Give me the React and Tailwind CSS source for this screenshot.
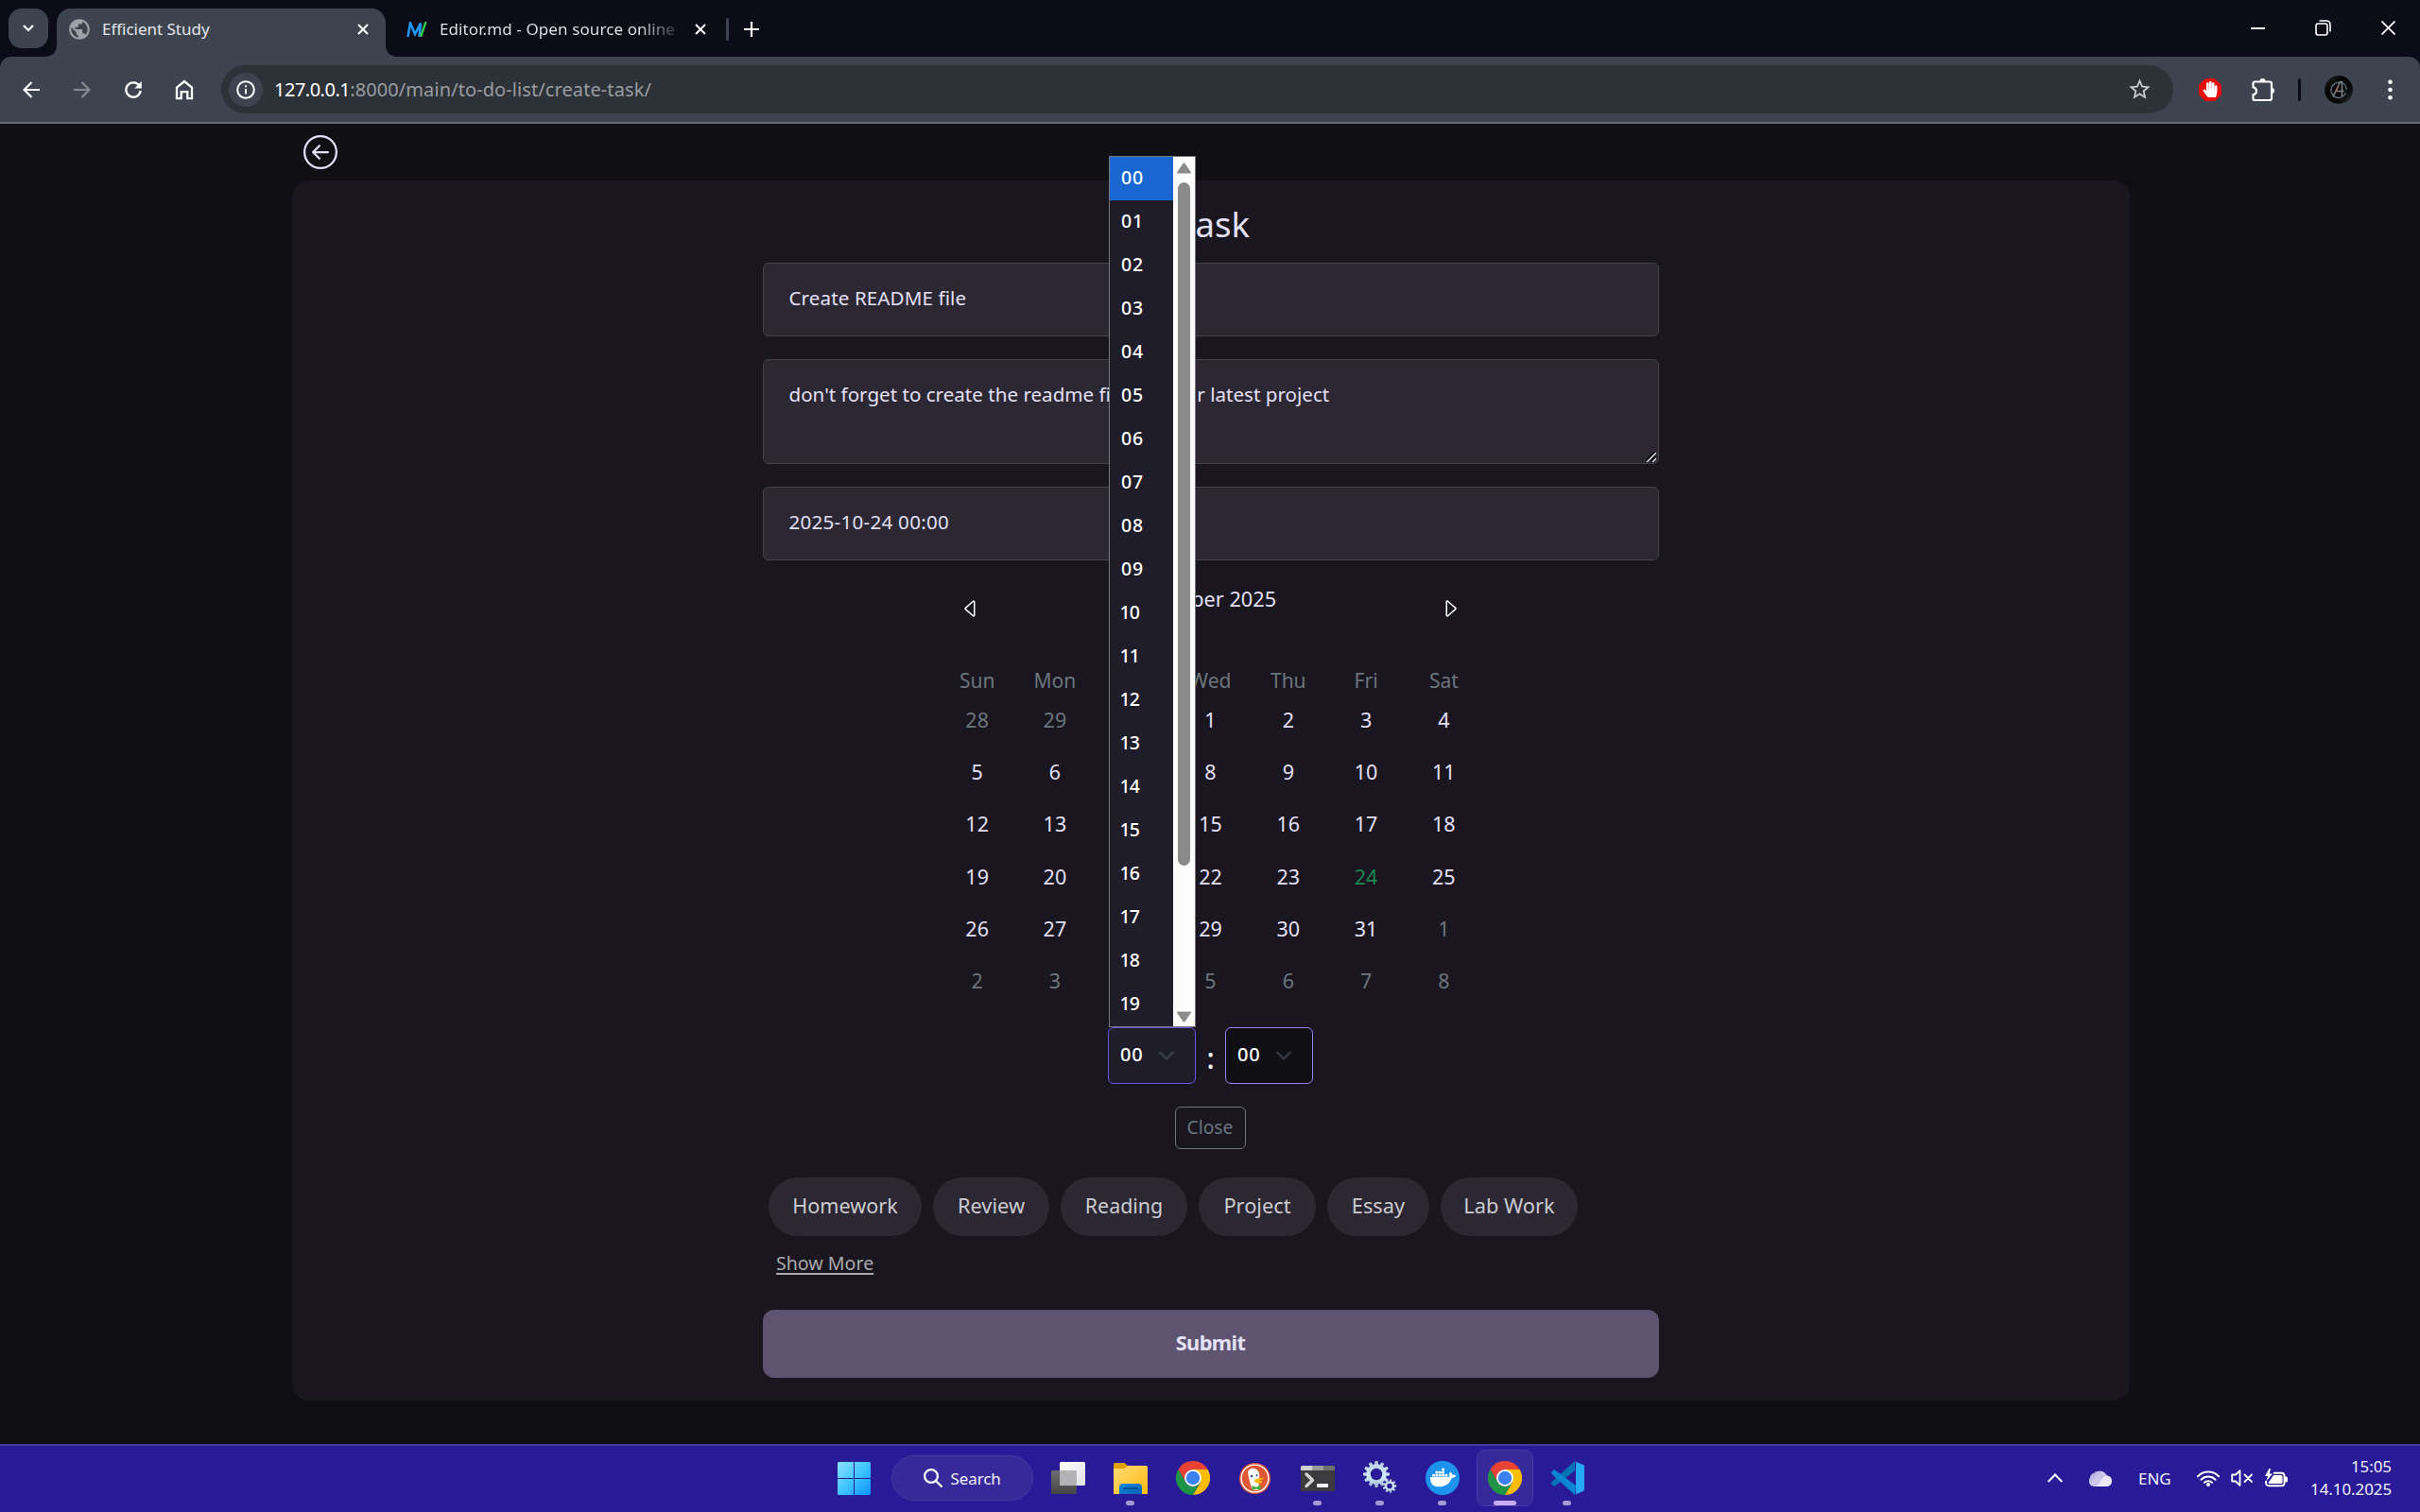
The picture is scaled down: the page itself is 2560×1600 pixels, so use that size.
import { BsArrowLeftCircle, BsCaretLeft, BsCaretRight } from "react-icons/bs";
import { MdPublic, MdStarBorder } from "react-icons/md";
import { FaHandPaper } from "react-icons/fa";
import { SiDocker } from "react-icons/si";

function CloseIcon() {
  return (
    <svg className="size-3 shrink-0" viewBox="0 0 12 12" stroke="#fff" strokeWidth="2">
      <path d="M1 1l10 10M11 1L1 11" />
    </svg>
  );
}

function TabStrip() {
  return (
    <div className="flex h-[60px] items-start bg-[#0c0c18] pl-[9px] text-[17px] text-[#e6e7ea]">
      <div className="mt-[9px] flex size-[42px] items-center justify-center rounded-[14px] bg-[#3d444f]">
        <svg className="size-3" viewBox="0 0 12 12" fill="none" stroke="#fff" strokeWidth="2.2">
          <path d="M1 3l5 5 5-5" />
        </svg>
      </div>
      <div className="relative mt-[9px] ml-[9px] flex h-[51px] w-[348px] items-start rounded-t-[15px] bg-[#3d444f] pl-[11px]">
        <svg className="absolute bottom-0 -left-3 size-3" viewBox="0 0 12 12" fill="#3d444f">
          <path d="M12 0v12H0C7 12 12 7 12 0z" />
        </svg>
        <svg className="absolute -right-3 bottom-0 size-3" viewBox="0 0 12 12" fill="#3d444f">
          <path d="M0 0v12h12C5 12 0 7 0 0z" />
        </svg>
        <div className="flex h-[43px] w-full items-center">
          <MdPublic className="size-[26px] text-[#9ea2a8]" />
          <span className="ml-[11px] flex-1 leading-[45px] tracking-[-0.02px]">Efficient Study</span>
          <div className="mr-[18px] flex">
            <CloseIcon />
          </div>
        </div>
      </div>
      <div className="mt-[9px] ml-[22px] flex h-[43px] items-center">
        <svg className="h-4 w-[22px]" viewBox="0 0 22 16" fill="none">
          <path d="M1.5 16L4 1.5 9 13 15 1.5 13.5 16" stroke="#2196f3" strokeWidth="2.6" />
          <path d="M20.5 0L15 16" stroke="#2fcc4f" strokeWidth="2.4" />
        </svg>
        <span className="ml-[13px] w-[249px] overflow-hidden whitespace-nowrap bg-linear-to-r from-[#e6e7ea] from-85% to-[#3a3a44] bg-clip-text leading-[45px] tracking-[0.1px] text-transparent">
          Editor.md - Open source online
        </span>
        <div className="ml-[21px] flex">
          <CloseIcon />
        </div>
        <div className="ml-[21px] h-6 w-[3px] rounded bg-[#3d444f]" />
        <svg className="ml-4 size-4" viewBox="0 0 16 16" stroke="#fff" strokeWidth="2.2">
          <path d="M8 0v16M0 8h16" />
        </svg>
      </div>
      <div className="mt-[21px] mr-[26px] ml-auto flex items-center gap-[53px]">
        <div className="h-[2px] w-[15px] bg-white" />
        <svg className="size-[17px]" viewBox="0 0 17 17" fill="none" stroke="#fff" strokeWidth="1.6">
          <rect x="1" y="4" width="12" height="12" rx="2.2" />
          <path d="M4.5 1H12a4 4 0 0 1 4 4v7.5" />
        </svg>
        <svg className="size-[15px]" viewBox="0 0 15 15" stroke="#fff" strokeWidth="1.7">
          <path d="M.5.5l14 14M14.5.5l-14 14" />
        </svg>
      </div>
    </div>
  );
}

function Toolbar() {
  return (
    <div className="bg-[#0c0c18]">
      <div className="flex h-[71px] items-center rounded-t-[12px] border-b-2 border-[#666c75] bg-[#3d444f] pl-6">
        <svg className="size-[18px]" viewBox="0 0 18 18" fill="none" stroke="#fff" strokeWidth="2.2">
          <path d="M18 9H2M9.5 1L1.6 9l7.9 8" />
        </svg>
        <svg className="ml-9 size-[18px]" viewBox="0 0 18 18" fill="none" stroke="#868b92" strokeWidth="2.2">
          <path d="M0 9h16M8.500 1l7.900 8-7.900 8" />
        </svg>
        <svg className="ml-9 size-[18px]" viewBox="0 0 18 18" fill="none" stroke="#fff" strokeWidth="2.3">
          <path d="M15.300 4.500A7.700 7.700 0 1 0 16.700 10" />
          <path d="M17.800 0v7.500h-7.500z" fill="#fff" stroke="none" />
        </svg>
        <svg className="ml-[35px] h-[22px] w-5" viewBox="0 0 20 22" fill="none" stroke="#fff" strokeWidth="2.3">
          <path d="M2 8.600L10 2l8 6.600v11.600h-4.700v-7H6.700v7H2z" />
        </svg>
        <div className="ml-[29px] flex h-[51px] flex-1 items-center rounded-full bg-[#2d3238] pr-[23px] pl-2">
          <div className="flex size-9 items-center justify-center rounded-full bg-[#3d444f]">
            <svg className="size-5" viewBox="0 0 20 20" fill="none" stroke="#fff" strokeWidth="2">
              <circle cx="10" cy="10" r="8.800" />
              <path d="M10 9v5.500M10 5.300v2" />
            </svg>
          </div>
          <span className="ml-3 text-[20px] leading-[50px] tracking-[0.09px] whitespace-nowrap text-[#999ca1]">
            <span className="tracking-[-0.5px] text-white">127.0.0.1</span>:8000/main/to-do-list/create-task/
          </span>
          <MdStarBorder className="ml-auto size-[27px] -mr-px text-[#c7c9cc]" />
        </div>
        <svg className="ml-[27px] size-6" viewBox="0 0 24 24" fill="#e60d0d">
          <path d="M7 0h10l7 7v10l-7 7H7l-7-7V7z" />
          <FaHandPaper x="3.500" y="3" size="17" color="#fff" />
        </svg>
        <svg className="ml-8 h-[26px] w-[25px]" viewBox="0 0 25 26" fill="none" stroke="#fff" strokeWidth="2.2">
          <path d="M3 4.500h16a2 2 0 0 1 2 2V22a2 2 0 0 1-2 2H3a1.500 1.500 0 0 1-1.500-1.500v-4.300c2.200-.5 3.500-1.800 3.500-4s-1.300-3.500-3.500-4V6A1.500 1.500 0 0 1 3 4.500z" />
          <path d="M8.500 4a3 3 0 0 1 6 0zM21 11a3 3 0 0 1 0 6z" fill="#fff" stroke="none" />
        </svg>
        <div className="ml-6 h-6 w-[3px] rounded bg-[#0c0c18]" />
        <svg className="ml-[25px] size-[30px]" viewBox="0 0 30 30" fill="none">
          <defs>
            <linearGradient id="av" x1="0" y1="0" x2="1" y2="1">
              <stop offset="0" stopColor="#2c2c2c" />
              <stop offset=".35" stopColor="#020202" />
              <stop offset=".7" stopColor="#090909" />
              <stop offset="1" stopColor="#3a3a3a" />
            </linearGradient>
          </defs>
          <circle cx="15" cy="15" r="15" fill="url(#av)" />
          <path d="M17.500 7.800A8 8 0 1 0 22.500 18" stroke="#566872" strokeWidth="1.500" />
          <path d="M19 7.500a8 8 0 0 1 4 7.500" stroke="#4c7482" strokeWidth="1.300" />
          <path d="M9 22.500L16.500 6.500h2V22M11.500 16.500h9" stroke="#7b7f83" strokeWidth="1.600" />
          <path d="M15 11l-3 6" stroke="#9c5a56" strokeWidth="1.200" />
        </svg>
        <svg className="mr-[29px] ml-[37px] h-[22px] w-[5px]" viewBox="0 0 5 22" fill="#fff">
          <circle cx="2.500" cy="2.700" r="2.300" />
          <circle cx="2.500" cy="11" r="2.300" />
          <circle cx="2.500" cy="19.300" r="2.300" />
        </svg>
      </div>
    </div>
  );
}

const weekdays = ["Sun", "Mon", "Tue", "Wed", "Thu", "Fri", "Sat"];
const days = [28, 29, 30, ...Array.from({ length: 31 }, (_, i) => i + 1), 1, 2, 3, 4, 5, 6, 7, 8];

function dayColor(day, index) {
  if (index < 3 || index > 33) return "text-[#6c757d]";
  if (day === 24) return "text-[#198754]";
  return "text-[#e4e0f6]";
}

function Calendar() {
  return (
    <div className="flex flex-col items-center">
      <div className="mt-[19px] mr-px flex h-16 w-[531px] items-center justify-between text-[#e4e0f6]">
        <BsCaretLeft className="size-6 text-white" />
        <span className="self-start pl-px text-[21.7px] leading-[43px]">October 2025</span>
        <BsCaretRight className="size-6 text-white" />
      </div>
      <div className="mt-[29px] mr-px grid w-[576px] grid-cols-7 text-center text-[#6c757d]">
        {weekdays.map((d) => (
          <span key={d} className="h-7 text-[21px] leading-[30px]">{d}</span>
        ))}
      </div>
      <div className="mr-px grid h-[331px] w-[576px] grid-cols-7 grid-rows-6 text-center text-[21.5px] leading-[57px]">
        {days.map((d, i) => (
          <span key={i} className={dayColor(d, i)}>{d}</span>
        ))}
      </div>
    </div>
  );
}

function HourMenu() {
  return (
    <div className="absolute -top-[923px] left-0 z-10 flex h-[922px] w-[92px] border border-[#767676] bg-[#1f1d29]">
      <div className="w-[67px] overflow-hidden text-white">
        {Array.from({ length: 20 }, (_, i) => (
          <div key={i} className={i === 0 ? "h-[46px] bg-[#1967d2] pl-3" : "h-[46px] pl-3"}>
            <span className={i > 9 ? "-ml-[1.5px] block text-[19.5px] leading-[44px] font-medium tracking-[-0.8px]" : "block text-[19.5px] leading-[44px] font-medium tracking-[0.8px]"}>
              {String(i).padStart(2, "0")}
            </span>
          </div>
        ))}
      </div>
      <div className="flex w-[23px] flex-col items-center bg-[#fcfcfc]">
        <svg className="mt-1.5 h-3 w-[15px]" viewBox="0 0 15 12" fill="#8b8b8b">
          <path d="M6.500 1a1.200 1.200 0 0 1 2 0L14.700 10a1 1 0 0 1-1 1.600H1.300A1 1 0 0 1 .300 10z" />
        </svg>
        <div className="mt-[9px] h-[723px] w-[13px] rounded-full bg-[#8b8b8b]" />
        <svg className="mt-auto mb-1 h-3 w-[15px]" viewBox="0 0 15 12" fill="#8b8b8b">
          <path d="M6.500 11a1.200 1.200 0 0 0 2 0L14.700 2a1 1 0 0 0-1-1.600H1.300A1 1 0 0 0 .300 2z" />
        </svg>
      </div>
    </div>
  );
}

function SelectValue({ stroke }) {
  return (
    <div className="flex pl-3">
      <span className="text-[20px] leading-[55px] font-medium tracking-[0.8px] text-white">00</span>
      <svg className="mt-5 ml-4 size-[18px]" viewBox="0 0 16 16" fill="none" stroke={stroke} strokeWidth="2" strokeLinecap="round" strokeLinejoin="round">
        <path d="m2 5 6 6 6-6" />
      </svg>
    </div>
  );
}

function TimePicker() {
  return (
    <div className="mt-[23px] mr-px flex h-[60px] justify-center">
      <div className="relative w-[93px] rounded-md border border-[#6557e0] bg-[#1f1d29]">
        <SelectValue stroke="#3a3f49" />
        <HourMenu />
      </div>
      <span className="w-[31px] text-center text-[30px] leading-[65px] font-medium text-white">:</span>
      <div className="w-[93px] rounded-md border border-[#9a82f5] bg-[#100f14]">
        <SelectValue stroke="#343a40" />
      </div>
    </div>
  );
}

const field = "rounded-md border border-[#434247] bg-[#2b2733] pl-[26.5px] text-[20.6px] leading-[72px] text-[#e4e0f6]";

function TaskForm() {
  return (
    <div className="mx-auto flex w-[948px] flex-col">
      <h1 className="h-[87px] text-center text-[36.5px] leading-[92px] text-[#e4e0f6]">
        <span className="tracking-[4px]">T</span>ask
      </h1>
      <div className={`${field} h-[78px] tracking-[0.1px]`}>Create README file</div>
      <div className={`${field} relative mt-6 h-[111px]`}>
        don't forget to create the readme file for your latest project
        <svg className="absolute right-[2px] bottom-px size-[11px]" viewBox="0 0 11 11">
          <path d="M0 10L10 0M5.500 10l4.500-4.500" stroke="#000" strokeWidth="2" />
          <path d="M1 11L11 1M7 11l4-4" stroke="#e2e2e2" strokeWidth="1.500" />
        </svg>
      </div>
      <div className={`${field} mt-6 h-[78px] tracking-[0.25px]`}>2025-10-24 00:00</div>
      <Calendar />
      <TimePicker />
      <div className="mt-6 mr-[2px] h-[45px] w-[75px] self-center rounded-md border border-[#6c757d] text-center text-[19.3px] leading-[41px] text-[#6c757d]">
        Close
      </div>
      <div className="mt-[30px] flex gap-3 pl-1.5 text-center text-[21.8px] leading-[59px] text-[#cccbd0]">
        <div className="h-[62px] w-[162px] rounded-full bg-[#2b2733] text-[21.6px]">Homework</div>
        <div className="h-[62px] w-[123px] rounded-full bg-[#2b2733]">Review</div>
        <div className="h-[62px] w-[134px] rounded-full bg-[#2b2733] text-[21.4px]">Reading</div>
        <div className="h-[62px] w-[124px] rounded-full bg-[#2b2733]">Project</div>
        <div className="h-[62px] w-[108px] rounded-full bg-[#2b2733]">Essay</div>
        <div className="h-[62px] w-[145px] rounded-full bg-[#2b2733]">Lab Work</div>
      </div>
      <span className="mt-3 ml-3.5 self-start text-[19.6px] leading-[33px] text-[#aaaaad] underline decoration-[1.5px] underline-offset-[3px]">
        Show More
      </span>
      <div className="mt-[33px] h-[72px] rounded-[12px] bg-[#5e5370] pr-px text-center text-[21.8px] leading-[70px] font-bold tracking-[-0.6px] text-[#e4e0f6]">
        Submit
      </div>
    </div>
  );
}

function ChromeLogo() {
  return (
    <svg className="size-9" viewBox="0 0 48 48">
      <path d="M24 12h20.800A24 24 0 0 1 24 48L34.400 30z" fill="#fbbc04" />
      <path d="M3.200 12A24 24 0 0 1 44.800 12H24a12 12 0 0 0-10.400 18z" fill="#ea4335" />
      <path d="M3.200 12L13.600 30a12 12 0 0 0 20.800 0L24 48A24 24 0 0 1 3.200 12z" fill="#1e9446" />
      <circle cx="24" cy="24" r="12" fill="#fff" />
      <circle cx="24" cy="24" r="9.600" fill="#3b82f0" />
    </svg>
  );
}

function gearPath(cx, cy, outer, inner, teeth) {
  const points = [];
  for (let i = 0; i < teeth; i++) {
    const step = (Math.PI * 2) / teeth;
    [[-0.32, inner], [-0.2, outer], [0.2, outer], [0.32, inner]].forEach(([o, r]) => {
      const a = (i + o) * step;
      points.push(`${(cx + r * Math.cos(a)).toFixed(2)} ${(cy + r * Math.sin(a)).toFixed(2)}`);
    });
  }
  return `M${points.join("L")}z`;
}

function ring(cx, cy, r) {
  return `M${cx - r} ${cy}a${r} ${r} 0 1 0 ${2 * r} 0a${r} ${r} 0 1 0 ${-2 * r} 0z`;
}

function Slot({ active, dot, children }) {
  return (
    <div className="relative flex h-[68px] w-[66px] items-center justify-center">
      {active && <div className="absolute top-1 left-[3px] size-[60px] rounded-[9px] border border-[#453aa8] bg-[#37299c]" />}
      <div className="relative flex">{children}</div>
      {dot && <div className={active ? "absolute top-[58px] h-[5px] w-6 rounded-full bg-[#cbaaf7]" : "absolute top-[58px] h-[5px] w-[9px] rounded-full bg-[#a49bd4]"} />}
    </div>
  );
}

function Taskbar() {
  return (
    <div className="grid h-[72px] grid-cols-[1fr_auto_1fr] border-t-2 border-[#463a9b] bg-[#291b97] text-[#f1f0fa]">
      <div />
      <div className="flex pl-px">
        <Slot>
          <svg className="mr-px size-[35px]" viewBox="0 0 35 35">
            <defs>
              <linearGradient id="win" x1="0" y1="0" x2="1" y2="1">
                <stop offset="0" stopColor="#8ae2ff" />
                <stop offset=".5" stopColor="#41c4ff" />
                <stop offset="1" stopColor="#0a93fb" />
              </linearGradient>
            </defs>
            <path d="M1.500 0H17v17H0V1.500A1.500 1.500 0 0 1 1.500 0zM18 0h15.500A1.500 1.500 0 0 1 35 1.500V17H18zM0 18h17v17H1.500A1.500 1.500 0 0 1 0 33.500zM18 18h17v15.500a1.500 1.500 0 0 1-1.500 1.500H18z" fill="url(#win)" />
          </svg>
        </Slot>
        <div className="mt-[10px] mr-1 ml-1.5 flex h-12 w-[150px] items-center rounded-full border border-[#43389f] bg-[#37299a] pl-[33px]">
          <svg className="size-5" viewBox="0 0 20 20" fill="none" stroke="#fff" strokeWidth="2.200" strokeLinecap="round">
            <circle cx="8" cy="8" r="6.900" />
            <path d="M13 13l6 6" />
          </svg>
          <span className="ml-[9px] text-[17px] leading-[47px] tracking-[-0.1px]">Search</span>
        </div>
        <Slot>
          <svg className="h-[34px] w-9" viewBox="0 0 36 34">
            <defs>
              <linearGradient id="tv1" x1="0" y1="0" x2="0" y2="1"><stop offset="0" stopColor="#6e6e6e" /><stop offset="1" stopColor="#454545" /></linearGradient>
              <linearGradient id="tv2" x1="0" y1="0" x2="1" y2="1"><stop offset="0" stopColor="#fff" /><stop offset="1" stopColor="#e2e2e6" /></linearGradient>
            </defs>
            <rect x="9" y="0" width="27" height="25" rx="1.500" fill="url(#tv2)" />
            <rect x="0" y="9" width="27" height="25" rx="1.500" fill="url(#tv1)" />
            <path d="M9 9h18v16H9z" fill="#b3b3b5" />
          </svg>
        </Slot>
        <Slot dot>
          <svg className="h-[33px] w-9" viewBox="0 0 36 33">
            <defs>
              <linearGradient id="fe" x1="0" y1="0" x2="1" y2="1"><stop offset="0" stopColor="#ffdb73" /><stop offset="1" stopColor="#fcba14" /></linearGradient>
              <linearGradient id="fb" x1="0" y1="0" x2="1" y2="1"><stop offset="0" stopColor="#0a86dc" /><stop offset="1" stopColor="#0362b4" /></linearGradient>
            </defs>
            <path d="M0 1.500A1.500 1.500 0 0 1 1.500 0h10L15 3v4H0z" fill="#e0a000" />
            <path d="M0 6h11.500L15 3h19.500A1.500 1.500 0 0 1 36 4.500V33H0z" fill="url(#fe)" />
            <path d="M6 33v-7a4 4 0 0 1 4-4h16a4 4 0 0 1 4 4v7z" fill="url(#fb)" />
            <path d="M11 27.200h14" stroke="#064a8a" strokeWidth="1.800" strokeLinecap="round" />
          </svg>
        </Slot>
        <Slot><ChromeLogo /></Slot>
        <Slot>
          <svg className="size-[33px]" viewBox="0 0 33 33">
            <circle cx="16.500" cy="16.500" r="16.500" fill="#de5833" />
            <circle cx="16.500" cy="16.500" r="14.400" fill="none" stroke="#fff" strokeWidth="1.400" />
            <path d="M9.500 8.500C11 5.500 15 5 17.500 6.500c3 1.800 3.800 4.500 3.800 7.500 0 2-.3 3.500-.8 5l.5 9.500-6.500.5C12 25 10.300 17 9.600 13.500c-.4-2-.6-3.700-.1-5z" fill="#fff" />
            <path d="M16 18.500c1.500-2 5.500-2.600 9.800-2.400 0 1.500-3 2.200-4.800 2.600 1.500.6 3 .4 3.700 1.200-1.500 1.900-5.500 2-7.500.9-.9-.5-1.500-1.300-1.200-2.300z" fill="#fdb813" />
            <path d="M13.500 24l4.500 1.700 4.700-2.200v5.200L18 27.500 13.500 29z" fill="#43a83d" />
            <circle cx="13" cy="14" r="1.200" fill="#26456e" />
            <circle cx="18.500" cy="13.300" r="1" fill="#26456e" />
          </svg>
        </Slot>
        <Slot dot>
          <svg className="h-[27px] w-9" viewBox="0 0 36 27">
            <rect width="36" height="27" rx="1.500" fill="#3b3b3d" />
            <path d="M0 5V1.500A1.500 1.500 0 0 1 1.500 0H12v5z" fill="#cfcfcf" />
            <path d="M12 0h12v5H12z" fill="#9c9c9c" />
            <path d="M24 0h10.500A1.500 1.500 0 0 1 36 1.500V5H24z" fill="#707070" />
            <path d="M6 9l6.500 6.300L6 21.500" fill="none" stroke="#d4d4d4" strokeWidth="3.400" strokeLinecap="round" strokeLinejoin="round" />
            <rect x="17" y="19" width="12" height="4" rx=".8" fill="#f2f2f2" />
          </svg>
        </Slot>
        <Slot dot>
          <svg className="-mt-0.5 h-[34px] w-9" viewBox="0 0 36 34">
            <defs>
              <linearGradient id="ge" x1="0" y1="0" x2="0" y2="1"><stop offset="0" stopColor="#b9cde0" /><stop offset=".6" stopColor="#cfeafb" /><stop offset="1" stopColor="#9db4cc" /></linearGradient>
            </defs>
            <path d={gearPath(14, 14, 14, 10.8, 12) + ring(14, 14, 6.2)} fill="url(#ge)" fillRule="evenodd" />
            <path d={gearPath(28, 26.5, 7.3, 5.2, 9) + ring(28, 26.5, 2.8)} fill="url(#ge)" fillRule="evenodd" />
          </svg>
        </Slot>
        <Slot dot>
          <div className="flex size-9 items-center justify-center rounded-full bg-[#1d93ee]">
            <SiDocker className="mb-0.5 ml-0.5 size-[27px] text-white" />
          </div>
        </Slot>
        <Slot active dot><ChromeLogo /></Slot>
        <Slot dot>
          <svg className="size-9" viewBox="0 0 36 36">
            <path d="M26 0L1.200 22.500a1.200 1.200 0 0 0 0 1.800L3.300 26.200a1.500 1.500 0 0 0 2 .1L26 10z" fill="#0073b7" />
            <path d="M26 36L1.200 13.500a1.200 1.200 0 0 1 0-1.800L3.300 9.800a1.500 1.500 0 0 1 2-.1L27 26z" fill="#0a85d1" />
            <path d="M25.500 0.200L34.800 4A2 2 0 0 1 36 6v24a2 2 0 0 1-1.200 1.900L25.500 36c1 0 1.500-.6 1.500-1.800V1.800c0-1.200-.5-1.700-1.500-1.600z" fill="#25a9f2" />
          </svg>
        </Slot>
      </div>
      <div className="flex h-[68px] items-center justify-end pr-[30px] text-[17px]">
        <svg className="h-[10px] w-4" viewBox="0 0 16 10" fill="none" stroke="#fff" strokeWidth="2"><path d="M.7 9L8 1.500 15.300 9" /></svg>
        <svg className="ml-7 h-[17px] w-6" viewBox="0 0 24 17">
          <defs>
            <linearGradient id="cl" x1="0" y1="0" x2="1" y2="1"><stop offset="0" stopColor="#a59dd6" /><stop offset="1" stopColor="#f4f2fc" /></linearGradient>
          </defs>
          <path d="M5.500 17A5.500 5.500 0 0 1 1 8a6 6 0 0 1 4-5 9 9 0 0 1 14 2.500A6 6 0 0 1 19 17z" fill="#c9c4ea" />
          <path d="M6.500 17C13 15 12 6 19.500 5.600a5.800 5.800 0 0 1-.5 11.400z" fill="#ece9f9" />
          <path d="M1 8a6 6 0 0 1 4-5A9 9 0 0 1 17 3C11 4 9 13 2.500 15.500A5.500 5.500 0 0 1 1 8z" fill="url(#cl)" />
        </svg>
        <span className="ml-7 w-[34px] leading-[69px]">ENG</span>
        <svg className="ml-7 h-[17px] w-6" viewBox="0 0 24 17" fill="none" stroke="#fff" strokeWidth="2" strokeLinecap="round">
          <path d="M1 6.200a15.500 15.500 0 0 1 22 0M4.500 9.700a10.500 10.500 0 0 1 15 0M8 12.800a5.700 5.700 0 0 1 8 0" />
          <circle cx="12" cy="15" r="2" fill="#fff" stroke="none" />
        </svg>
        <svg className="ml-3 h-[18px] w-6" viewBox="0 0 24 18" fill="none" stroke="#fff" strokeWidth="1.800" strokeLinejoin="round" strokeLinecap="round">
          <path d="M9.500 1.200v15.600L5 12.500H1.200v-7H5zM14.500 5.500l7.500 7.500M22 5.500L14.500 13" />
        </svg>
        <svg className="ml-3 h-[20px] w-6" viewBox="0 0 24 20" fill="none">
          <path d="M9 4.800h8.500a3 3 0 0 1 3 3v7.400a3 3 0 0 1-3 3H4a3 3 0 0 1-3-3V13" stroke="#fff" strokeWidth="1.900" />
          <path d="M21 8.500h1.500a1.500 1.500 0 0 1 1.500 1.500v3a1.500 1.500 0 0 1-1.500 1.500H21z" fill="#fff" />
          <path d="M9 7h8a1.500 1.500 0 0 1 1.500 1.500v6A1.500 1.500 0 0 1 17 16H5a1.500 1.500 0 0 1-1.500-1.500L5 13z" fill="#fff" />
          <path d="M4.500 0L0 8h3l-1.500 5.500L8 5.500H4.800L6 0z" fill="#fff" />
        </svg>
        <div className="ml-[24px] w-[86px] text-right text-[16.9px] leading-6 tracking-[-0.02px]">
          <div>15:05</div>
          <div>14.10.2025</div>
        </div>
      </div>
    </div>
  );
}

export default function App() {
  return (
    <div className="flex h-[1600px] w-[2560px] flex-col overflow-hidden font-['Noto_Sans',sans-serif]">
      <TabStrip />
      <Toolbar />
      <div className="flex-1 bg-[#100f14]">
        <div className="flex h-[60px] items-center pl-[321px]">
          <BsArrowLeftCircle className="size-9 text-[#e4e0f6]" />
        </div>
        <div className="ml-[309px] h-[1291px] w-[1944px] rounded-[18px] bg-[#19161f]">
          <TaskForm />
        </div>
      </div>
      <Taskbar />
    </div>
  );
}
